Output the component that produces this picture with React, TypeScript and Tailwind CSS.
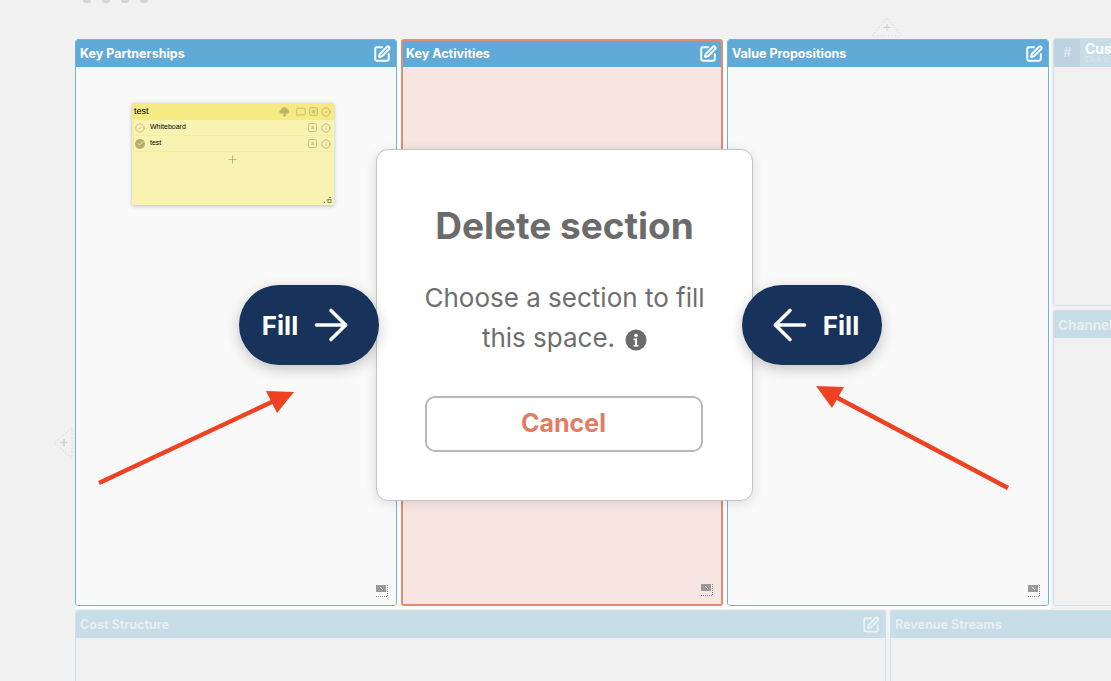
import React from 'react';
import { ArrowLeft, ArrowRight, Check, CircleCheck, Info, MessageSquare, Plus, SquarePen } from 'lucide-react';

const ResizeIcon = () => (
  <svg width="14" height="12" viewBox="0 0 14 12" className="absolute right-[6px] bottom-[8px]">
    <rect x="0" y="0" width="10" height="7" fill="#9a9a9a" />
    <path d="M4 2l3 3" stroke="#f5f5f5" strokeWidth="1" />
    <path d="M11.5 0V11.5H0" fill="none" stroke="#8d8d8d" strokeWidth="1" strokeDasharray="1 1" />
  </svg>
);

const Panel = ({ title, danger, children }: { title: string; danger?: boolean; children?: React.ReactNode }) => (
  <div
    className={`relative w-[322px] h-[567px] flex flex-col rounded-[3px] overflow-hidden ${
      danger ? 'border-2 border-[#e58a72]' : 'border border-[#6db4dc]'
    }`}
  >
    <div
      className={`shrink-0 bg-[#5faad7] flex items-center justify-between ${
        danger ? 'h-[26px] pl-[3px] pr-[4px]' : 'h-[27px] pl-[4px] pr-[5px]'
      }`}
    >
      <span className="text-[12.5px] font-bold text-white pt-[1px]">{title}</span>
      <SquarePen size={18} strokeWidth={2.6} className="text-white" />
    </div>
    <div className={`relative flex-1 ${danger ? 'bg-[#f7e5e1]' : 'bg-[#f9f9f9]'}`}>
      {children}
      <ResizeIcon />
    </div>
  </div>
);

const FadedPanel = ({ title, className, titleClass, edit }: { title: string; className: string; titleClass: string; edit?: boolean }) => (
  <div className={`flex flex-col rounded-t-[3px] overflow-hidden border border-[#cfdfe8] ${className}`}>
    <div className="h-[27px] shrink-0 bg-[#c6dce7] flex items-center justify-between pl-[4px] pr-[5px]">
      <span className={`font-bold text-[#e9eff2] whitespace-nowrap pt-[1px] ${titleClass}`}>{title}</span>
      {edit && <SquarePen size={18} strokeWidth={2.6} className="text-[#e9eff2]" />}
    </div>
    <div className="flex-1 bg-[#f0f0f0]" />
  </div>
);

const TinyBox = ({ dark }: { dark?: boolean }) => (
  <span
    className={`w-[9px] h-[9px] rounded-[2px] border border-[#cbc584] flex items-center justify-center text-[5px] leading-none text-[#a9a373] ${
      dark ? 'bg-[#ece07c]' : ''
    }`}
  >
    a
  </span>
);

const TinyInfo = () => <Info size={10} strokeWidth={1.8} className="text-[#aaa57a]" />;

const Sticky = () => (
  <div className="absolute left-[56px] top-[36px] w-[202px] h-[102px] bg-[#f8f3b0] shadow-[0_1px_4px_rgba(0,0,0,0.25)] font-['Liberation_Sans',sans-serif]">
    <div className="h-[17px] bg-[#f6ea82] flex items-center pl-[2px] pr-[3px] text-[9px] text-black">
      <span className="flex-1">test</span>
      <div className="flex items-center gap-[3px]">
        <svg width="11" height="11" viewBox="0 0 12 12" className="mr-[3px]">
          <path d="M3 8.5a2.5 2.5 0 0 1-.3-5A3.4 3.4 0 0 1 9 3.2a2.7 2.7 0 0 1 0 5.3z" fill="#bfb86a" />
          <path d="M6 6v5M4.3 9.5L6 11.3l1.7-1.8" stroke="#bfb86a" strokeWidth="1.2" fill="none" />
        </svg>
        <MessageSquare size={10} strokeWidth={1.8} className="text-[#b3ad6c]" />
        <TinyBox dark />
        <CircleCheck size={10} strokeWidth={1.8} className="text-[#b3ad6c]" />
      </div>
    </div>
    <div className="h-[16px] flex items-center border-b border-[#f3eca0] border-l-2 border-l-[#f6ee96] pl-[1px] pr-[3px] text-[7px] text-black">
      <CircleCheck size={10} strokeWidth={1.8} className="text-[#b9b48c] mr-[5px]" />
      <span className="flex-1">Whiteboard</span>
      <div className="flex items-center gap-[4px]">
        <TinyBox />
        <TinyInfo />
      </div>
    </div>
    <div className="h-[16px] flex items-center border-b border-[#f3eca0] border-l-2 border-l-[#f6ee96] pl-[1px] pr-[3px] text-[7px] text-black">
      <span className="w-[10px] h-[10px] rounded-full bg-[#b5ae6e] flex items-center justify-center mr-[5px]">
        <Check size={7} strokeWidth={3} className="text-[#f8f3b0]" />
      </span>
      <span className="flex-1">test</span>
      <div className="flex items-center gap-[4px]">
        <TinyBox />
        <TinyInfo />
      </div>
    </div>
    <div className="flex justify-center pt-[1px] pr-[2px]">
      <Plus size={13} strokeWidth={1.4} className="text-[#a8a47a]" />
    </div>
    <svg width="8" height="8" viewBox="0 0 8 8" className="absolute right-[2px] bottom-[2px]">
      <path d="M0 7.5h1M2.5 5h1M5 2.5h2" stroke="#8d8a6a" strokeWidth="1" />
      <rect x="4" y="4.5" width="3" height="3" fill="none" stroke="#8d8a6a" strokeWidth="1" />
    </svg>
  </div>
);

export default function App() {
  return (
    <div className="relative w-[1111px] h-[681px] overflow-hidden bg-[#f1f1f1] font-['Inter',sans-serif]">
      <div className="h-[3px] flex gap-[11px] pl-[83px]">
        <span className="w-[8px] h-[3px] rounded-b bg-[#d4d4d4]" />
        <span className="w-[8px] h-[3px] rounded-b bg-[#d4d4d4]" />
        <span className="w-[8px] h-[3px] rounded-b bg-[#d4d4d4]" />
        <span className="w-[8px] h-[3px] rounded-b bg-[#d4d4d4]" />
      </div>

      <div className="mt-[36px] pl-[75px] w-max flex flex-col gap-[1px]">
        <div className="flex items-start gap-[2px]">
          <div className="flex gap-[4px] bg-white pb-[3px] pr-[2px]">
            <Panel title="Key Partnerships">
              <Sticky />
            </Panel>
            <Panel title="Key Activities" danger />
            <Panel title="Value Propositions" />
          </div>
          <div className="w-[400px] flex flex-col gap-[4px] -mt-[1px]">
            <div className="h-[268px] flex flex-col rounded-[3px] overflow-hidden border border-[#cfdfe8] bg-[#f0f0f0]">
              <div className="h-[28px] shrink-0 bg-[#c6dce7] flex">
                <div className="w-[26px] bg-[#bdd4e0] flex items-center justify-center text-[13px] italic text-[#e3ecf1]">#</div>
                <div className="pl-[5px] flex flex-col leading-none pt-[3px]">
                  <span className="text-[14px] font-bold text-white">Customer Segments</span>
                  <span className="text-[7px] text-[#dfe9ee]">Click to edit</span>
                </div>
              </div>
            </div>
            <FadedPanel title="Channels" titleClass="text-[13.5px]" className="h-[296px] rounded-b-[3px]" />
          </div>
        </div>
        <div className="flex gap-[4px] h-[100px]">
          <FadedPanel title="Cost Structure" titleClass="text-[12.5px]" className="w-[811px]" edit />
          <FadedPanel title="Revenue Streams" titleClass="text-[12.5px]" className="w-[400px]" />
        </div>
      </div>

      {/* add-section handles */}
      <svg width="32" height="20" viewBox="0 0 32 20" className="absolute left-[871px] top-[17px]">
        <path d="M1 19L16 1L31 19Z" fill="none" stroke="#d9d9d9" strokeDasharray="1.5 2" />
        <path d="M16 7v7M12.5 10.5h7" stroke="#cfcfcf" strokeWidth="1" />
      </svg>
      <svg width="20" height="32" viewBox="0 0 20 32" className="absolute left-[53px] top-[427px]">
        <path d="M19 1L1 16L19 31Z" fill="none" stroke="#d9d9d9" strokeDasharray="1.5 2" />
        <path d="M11 12v7M7.5 15.5h7" stroke="#cfcfcf" strokeWidth="1.5" />
      </svg>

      {/* modal */}
      <div className="absolute left-[376px] top-[149px] w-[377px] h-[352px] bg-white rounded-[12px] border border-[#c4c4c4] shadow-[0_2px_12px_rgba(0,0,0,0.12)] flex flex-col items-center pt-[50px]">
        <h2 className="text-[37px] leading-[52px] font-bold text-[#6b6b6b]">Delete section</h2>
        <p className="mt-[26px] w-[300px] text-center text-[26px] leading-[40px] text-[#6e6e6e]">
          Choose a section to fill this space.
          <svg width="22" height="22" viewBox="0 0 22 22" className="inline-block ml-[10px] align-[-4px]">
            <circle cx="11" cy="11" r="10.5" fill="#6b6b6b" />
            <circle cx="11" cy="6.5" r="1.8" fill="#fff" />
            <path d="M8.5 9.5h3.6v6.5h1.4v1.5h-5v-1.5h1.4v-5h-1.4z" fill="#fff" />
          </svg>
        </p>
        <button className="mt-[38px] mr-[2px] w-[278px] h-[56px] rounded-[10px] border-2 border-[#b8b8b8] text-[25px] font-bold text-[#e07d62]">
          Cancel
        </button>
      </div>

      {/* fill buttons */}
      <div className="absolute left-[239px] top-[285px] w-[140px] h-[80px] rounded-full bg-[#17325b] shadow-[0_4px_14px_rgba(0,0,0,0.22)] flex items-center justify-center gap-[8px] text-white">
        <span className="text-[26px] font-bold">Fill</span>
        <ArrowRight size={50} strokeWidth={1.7} />
      </div>
      <div className="absolute left-[742px] top-[285px] w-[140px] h-[80px] rounded-full bg-[#17325b] shadow-[0_4px_14px_rgba(0,0,0,0.22)] flex items-center justify-center gap-[8px] text-white">
        <ArrowLeft size={50} strokeWidth={1.7} />
        <span className="text-[26px] font-bold">Fill</span>
      </div>

      {/* annotation arrows */}
      <svg width="1111" height="681" viewBox="0 0 1111 681" className="absolute inset-0 pointer-events-none">
        <path d="M99 483L276 400" stroke="#ee4222" strokeWidth="4.5" />
        <path d="M266 391L294 392L277 413Z" fill="#ee4222" />
        <path d="M1008 488L832 395" stroke="#ee4222" strokeWidth="4.5" />
        <path d="M816 386L844 387L832 408Z" fill="#ee4222" />
      </svg>
    </div>
  );
}
